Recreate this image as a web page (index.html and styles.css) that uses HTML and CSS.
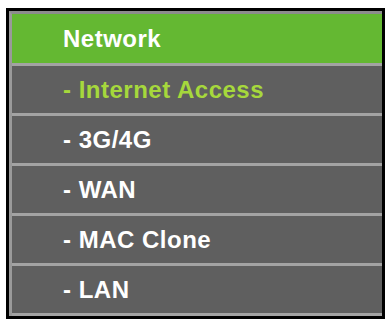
FILE: index.html
```html
<!DOCTYPE html>
<html>
<head>
<meta charset="utf-8">
<link rel="stylesheet" href="styles.css">
</head>
<body>
<div class="menu">
  <div class="inner">
    <div class="item header">Network</div>
    <div class="item active">- Internet Access</div>
    <div class="item">- 3G/4G</div>
    <div class="item">- WAN</div>
    <div class="item">- MAC Clone</div>
    <div class="item">- LAN</div>
  </div>
</div>
</body>
</html>
```
FILE: styles.css
```css
html, body {
  margin: 0;
  padding: 0;
  background: #ffffff;
}
body {
  padding: 8px 0 0 6px;
}
.menu {
  width: 373px;
  border: 3px solid #000;
  background: #000;
}
.inner {
  border-left: 3px solid #9a9a9a;
  border-top: 3px solid #8c8c8c;
}
.item {
  box-sizing: border-box;
  height: 50px;
  border-bottom: 3px solid #a3a3a3;
  background: #5f5f5f;
  color: #ffffff;
  font-family: "Liberation Sans", Arial, sans-serif;
  font-weight: bold;
  font-size: 24px;
  letter-spacing: 0.5px;
  padding-left: 51px;
  display: flex;
  align-items: center;
}
.header {
  background: #64b832;
  height: 52px;
}
.active {
  color: #a6d83c;
}
```
